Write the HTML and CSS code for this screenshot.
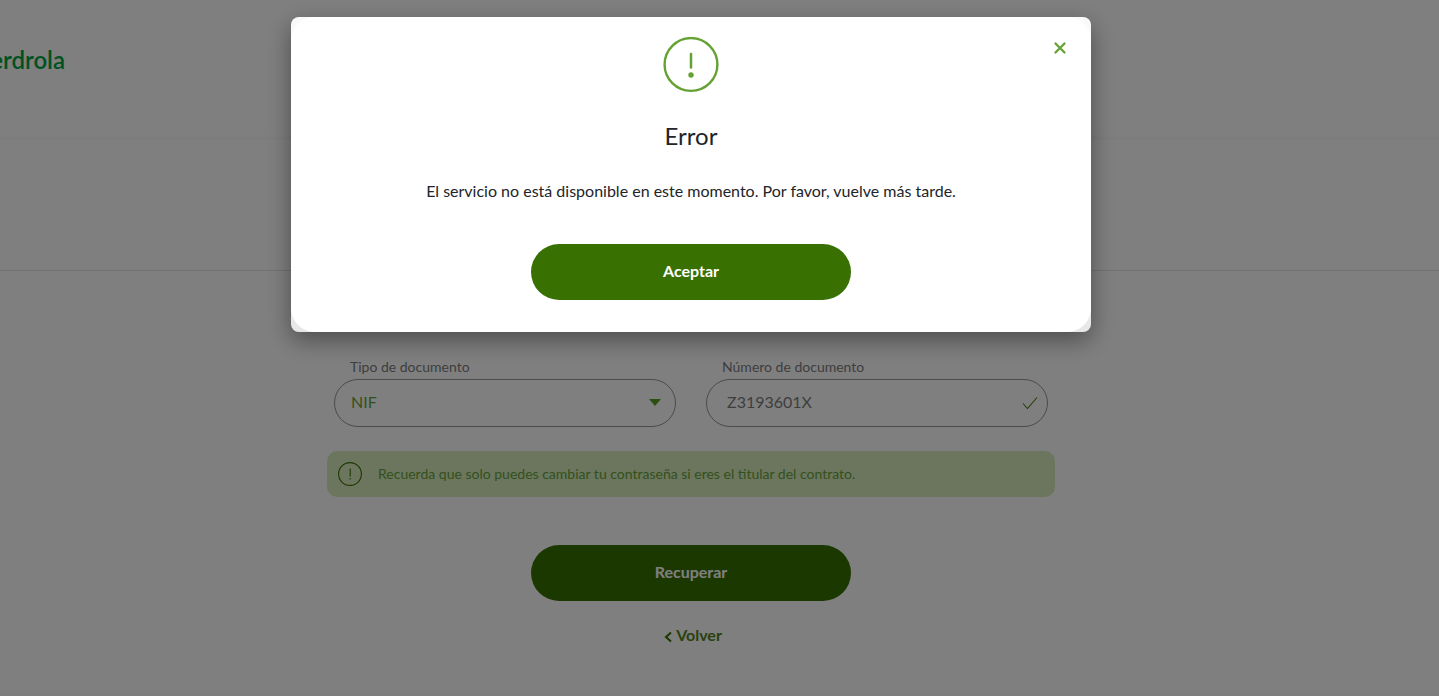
FILE: index.html
```html
<!DOCTYPE html>
<html lang="es">
<head>
<meta charset="utf-8">
<meta name="viewport" content="width=device-width, initial-scale=1">
<title>Iberdrola - Recuperar contraseña</title>
<link rel="stylesheet" href="styles.css">
</head>
<body>
<div class="page">
  <header class="header"><div class="logo"><span>Iberdrola</span></div></header>
  <div class="banner"></div>
  <main class="main">
    <form class="form">
      <div class="fields">
        <div class="field">
          <label for="tipo">Tipo de documento</label>
          <div class="control">
            <select id="tipo"><option>NIF</option></select>
            <svg class="arrow" width="12" height="8" viewBox="0 0 12 8" aria-hidden="true"><path d="M0 0h12L6 7z"/></svg>
          </div>
        </div>
        <div class="field">
          <label for="numero">Número de documento</label>
          <div class="control">
            <input id="numero" type="text" value="Z3193601X">
            <svg class="check" width="16" height="14" viewBox="0 0 16 14" aria-hidden="true"><path d="M1 7.500L5.500 12.500L15 1.500"/></svg>
          </div>
        </div>
      </div>
      <div class="note">
        <svg width="26" height="26" viewBox="0 0 26 26" aria-hidden="true"><circle cx="13" cy="13" r="11.400"/><path d="M13.200 7.500v8M13.200 17v1.500"/></svg>
        <p>Recuerda que solo puedes cambiar tu contraseña si eres el titular del contrato.</p>
      </div>
      <button class="button" type="button">Recuperar</button>
      <a class="back" href="#"><svg width="8" height="12" viewBox="0 0 8 12" aria-hidden="true"><path d="M7 1.500L2 6l5 4.500"/></svg>Volver</a>
    </form>
  </main>
  <footer class="footer"></footer>
</div>
<div class="overlay">
  <div class="modal" role="dialog" aria-modal="true" aria-labelledby="titulo">
    <div class="modal-body">
      <button class="close" type="button" aria-label="Cerrar"><svg width="12" height="12" viewBox="0 0 12 12" aria-hidden="true"><path d="M1.500 1.500l9 9M10.500 1.500l-9 9"/></svg></button>
      <svg class="warning" width="56" height="56" viewBox="0 0 56 56" aria-hidden="true"><circle class="ring" cx="28" cy="27.500" r="26.400"/><path d="M28 17v13.500"/><circle class="dot" cx="28" cy="38" r="2.700"/></svg>
      <h1 id="titulo">Error</h1>
      <p>El servicio no está disponible en este momento. Por favor, vuelve más tarde.</p>
      <button class="button" type="button">Aceptar</button>
    </div>
  </div>
</div>
</body>
</html>
```
FILE: styles.css
```css
* { box-sizing: border-box; }
body {
  margin: 0;
  font: 16px/24px Lato, "Open Sans", sans-serif;
  color: #212529;
  background: #fff;
}
h1, p { margin: 0; }
button, input, select { font: inherit; }
.page { height: 100vh; overflow: hidden; display: flex; flex-direction: column; }
.header {
  flex: none;
  height: 140px;
  padding-top: 44px;
  background: linear-gradient(#fff calc(100% - 8px), #f9f9f9);
}
.logo {
  display: flex;
  justify-content: flex-end;
  width: 65px;
  font: 600 24px/32px Lato, sans-serif;
  color: #00a443;
}
.banner { flex: none; height: 131px; border-bottom: 1px solid #e4e4e4; }
.main { flex: none; padding: 84px 57px 0 0; }
.form {
  display: flex;
  flex-direction: column;
  align-items: center;
  width: 100%;
  max-width: 728px;
  margin: 0 auto;
}
.fields { display: flex; gap: 30px; width: 100%; padding: 0 7px; }
.field { flex: 1; }
.field label { display: block; padding-left: 16px; font-size: 14px; color: #7c7c7c; }
.control { display: grid; align-items: center; }
.control > * { grid-area: 1 / 1; }
.control svg { justify-self: end; pointer-events: none; }
.control select, .control input {
  width: 100%;
  height: 48px;
  margin: 0;
  border: 1px solid #969696;
  border-radius: 24px;
  background: #fff;
  outline: 0;
  appearance: none;
}
.control select { padding: 0 16px 2px; color: #66a338; }
.control input { padding: 0 20px 3px; color: #7c7c7c; }
.arrow { margin-right: 15px; fill: #5c9e24; }
.check { margin-right: 10px; fill: none; stroke: #437a16; stroke-width: 1.100; }
.note {
  display: flex;
  align-items: center;
  gap: 15px;
  width: 100%;
  min-height: 46px;
  margin: 24px 0 48px;
  padding: 0 10px;
  border-radius: 10px;
  background: #d9ecbf;
  color: #66a338;
  font-size: 14px;
}
.note svg { flex: none; fill: none; stroke: #376f00; stroke-width: 1.100; }
.button {
  width: 320px;
  max-width: 100%;
  height: 56px;
  padding: 0 0 2px;
  border: 0;
  border-radius: 28px;
  background: #387002;
  color: #fff;
  font-weight: 700;
}
.back {
  display: flex;
  align-items: center;
  gap: 4px;
  margin-top: 22px;
  padding-left: 4px;
  color: #518521;
  font-weight: 700;
  text-decoration: none;
}
.back svg { fill: none; stroke: #376f00; stroke-width: 2; margin-top: 3px; }
.footer { flex: none; height: 4px; margin-top: auto; background: #fbfbfb; }
.overlay {
  position: fixed;
  inset: 0;
  padding: 17px 57px 0 0;
  background: rgba(0, 0, 0, .5);
}
.modal {
  width: 100%;
  max-width: 800px;
  margin: 0 auto;
  border-radius: 8px;
  background: linear-gradient(#fafafa, #e8e8e8);
  box-shadow: 0 8px 24px rgba(0, 0, 0, .4);
}
.modal-body {
  position: relative;
  display: flex;
  flex-direction: column;
  align-items: center;
  padding: 20px 20px 32px;
  border-radius: 24px;
  background: #fff;
}
.warning { fill: none; stroke: #65a133; stroke-width: 2.500; stroke-linecap: round; }
.warning .ring { stroke-width: 2.400; }
.warning .dot { fill: #65a133; stroke: none; }
.modal h1 { margin: 28px 0; font-size: 24px; line-height: 30px; font-weight: 400; }
.modal p { margin-bottom: 41px; text-align: center; }
.close {
  position: absolute;
  top: 25px;
  right: 25px;
  display: flex;
  padding: 0;
  border: 0;
  background: none;
}
.close path { stroke: #65a133; stroke-width: 2.300; stroke-linecap: round; }
```
